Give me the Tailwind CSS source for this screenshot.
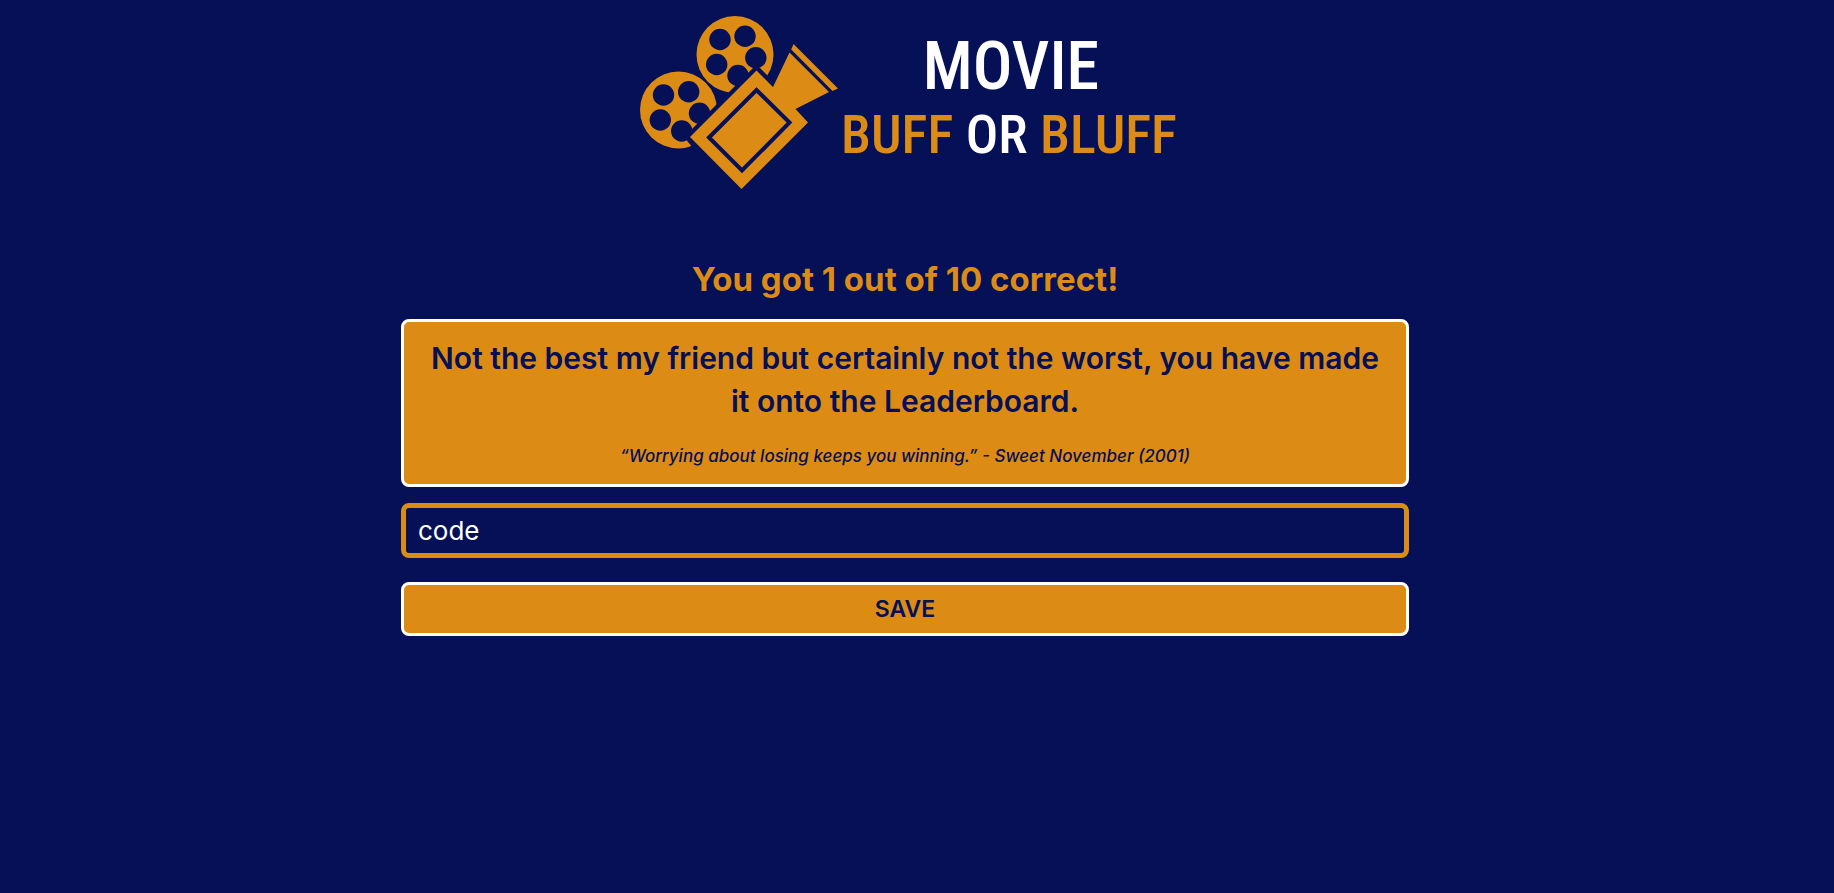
<!DOCTYPE html>
<html lang="en">
<head>
<meta charset="utf-8">
<meta name="viewport" content="width=device-width, initial-scale=1">
<title>Movie Buff or Bluff</title>
<script src="https://cdn.jsdelivr.net/npm/@tailwindcss/browser@4"></script>
</head>
<body class="min-h-screen bg-[#051057] pr-6 font-[Inter,'Noto_Sans',sans-serif] text-[#051057]">
<header class="flex justify-center pt-3">
  <a href="#" aria-label="Movie Buff or Bluff home" class="ml-1.5 block">
    <svg class="h-48 w-[540px]" viewBox="638 12 540 192" role="img" aria-label="Movie Buff or Bluff">
      <g fill="#dc8c14">
        <circle cx="678.5" cy="110" r="38.5"/>
        <circle cx="735" cy="54.5" r="38.5"/>
      </g>
      <g fill="#051057">
        <circle cx="663.5" cy="95" r="10.7"/><circle cx="688.7" cy="91.7" r="10.7"/><circle cx="660.3" cy="120" r="10.7"/><circle cx="681.7" cy="131" r="10.7"/><circle cx="699.5" cy="113.3" r="10.7"/>
        <circle cx="720" cy="39.5" r="10.7"/><circle cx="745" cy="36.3" r="10.7"/><circle cx="716.7" cy="64.5" r="10.7"/><circle cx="738" cy="75.5" r="10.7"/><circle cx="755.8" cy="57.8" r="10.7"/>
        <path d="M684 137L756.5 64.5L772 80L776 122L742 180L697 153Z"/>
      </g>
      <g fill="#dc8c14">
        <path d="M690 137L756.5 70.5L773 87L789.5 52.5L829 92L795.5 109L808 122.5L741.5 189Z"/>
        <path d="M791.2 49.5L793.5 44L838 88.5L832.5 91Z"/>
      </g>
      <path d="M709 137.5L756.5 90L789.5 122.5L742 170.5Z" fill="none" stroke="#051057" stroke-width="4"/>
      <g font-family="'Roboto Condensed','Liberation Sans Narrow',sans-serif" font-weight="500" text-anchor="middle">
        <text x="1011" y="89" font-size="66" fill="#fff">MOVIE</text>
        <text x="1009" y="153" font-size="54" fill="#dc8c14">BUFF <tspan fill="#fff">OR</tspan> BLUFF</text>
      </g>
    </svg>
  </a>
</header>
<main class="mx-auto mt-12 w-[1008px] max-w-full">
  <h1 class="text-center text-[33px] leading-[54px] font-bold text-[#dc8c14]">You got 1 out of 10 correct!</h1>
  <section class="mt-[13px] rounded-lg border-3 border-white bg-[#dc8c14] px-5 pt-[15px] pb-4 text-center">
    <h2 class="text-[30px] leading-[43px] font-semibold">Not the best my friend but certainly not the worst, you have made it onto the Leaderboard.</h2>
    <p class="mt-[21px] text-[17px] leading-6 font-medium italic">“Worrying about losing keeps you winning.” - Sweet November (2001)</p>
  </section>
  <form class="mt-4 flex flex-col gap-6">
    <input type="text" aria-label="Username" value="code" class="h-[55px] w-full rounded-lg border-5 border-[#dc8c14] bg-transparent px-3 text-[26px] text-white outline-none">
    <button type="button" class="h-[54px] w-full rounded-lg border-3 border-white bg-[#dc8c14] text-[23px] font-semibold">SAVE</button>
  </form>
</main>
</body>
</html>
